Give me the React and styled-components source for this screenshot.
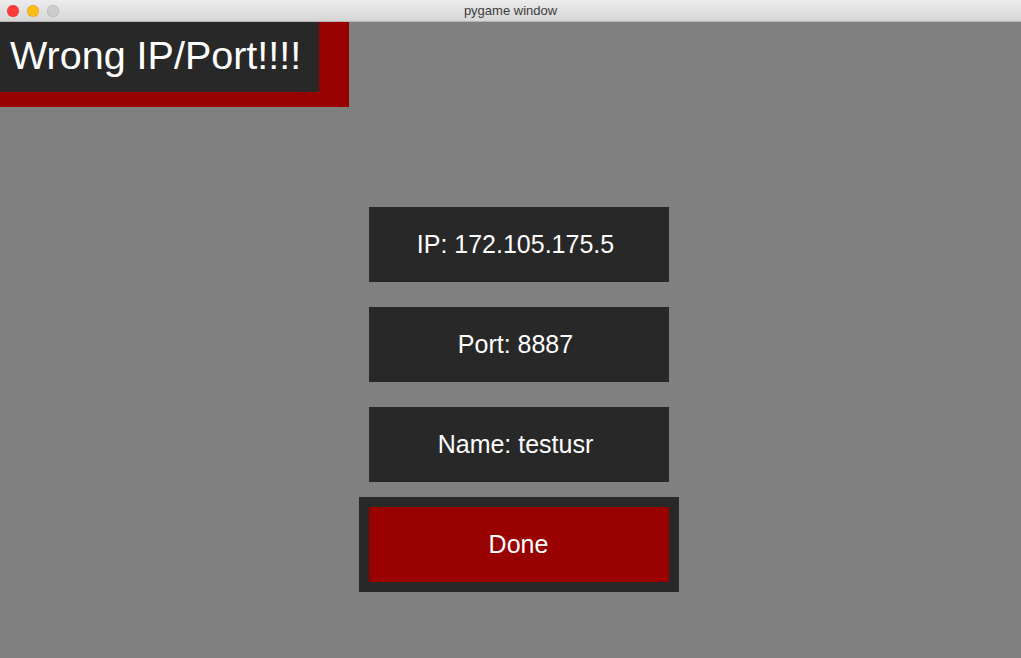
import React from 'react';
import styled, { createGlobalStyle } from 'styled-components';

const GlobalStyle = createGlobalStyle`
  html, body {
    margin: 0;
    padding: 0;
    background: #808080;
    font-family: "Liberation Sans", Arial, sans-serif;
  }
`;

const Window = styled.div`
  width: 1021px;
  height: 658px;
  display: flex;
  flex-direction: column;
  overflow: hidden;
`;

const TitleBar = styled.div`
  height: 21px;
  flex-shrink: 0;
  position: relative;
  display: flex;
  align-items: center;
  justify-content: center;
  background: linear-gradient(#ececec, #d6d6d6);
  border-bottom: 1px solid #b4b4b4;
  font-size: 13px;
  color: #3c3c3c;
`;

const Lights = styled.div`
  position: absolute;
  left: 7px;
  top: 5px;
  display: flex;
  gap: 8px;
`;

const Light = styled.span`
  width: 12px;
  height: 12px;
  border-radius: 50%;
  background: ${p => p.color};
  box-shadow: inset 0 0 0 0.5px rgba(0, 0, 0, 0.15);
`;

const Canvas = styled.div`
  flex: 1;
  background: #808080;
  display: flex;
  flex-direction: column;
`;

const Banner = styled.div`
  align-self: flex-start;
  background: #990000;
  padding: 0 30px 15px 0;
`;

const BannerText = styled.div`
  width: 319px;
  height: 70px;
  box-sizing: border-box;
  background: #282828;
  color: #fff;
  font-size: 39.5px;
  padding-left: 10px;
  padding-bottom: 4px;
  display: flex;
  align-items: center;
`;

const Form = styled.div`
  margin-top: 100px;
  padding-left: 16px;
  display: flex;
  flex-direction: column;
  align-items: center;
  gap: 25px;
`;

const Field = styled.div`
  width: 300px;
  height: 75px;
  display: flex;
  align-items: center;
  justify-content: center;
  background: ${p => (p.primary ? '#990000' : '#282828')};
  outline: ${p => (p.primary ? '10px solid #282828' : 'none')};
  color: #fff;
  font-size: 25px;
  padding: 0 ${p => (p.primary ? '0' : '6px')} 1px 0;
  box-sizing: border-box;
`;

export default function App() {
  return (
    <>
      <GlobalStyle />
      <Window>
        <TitleBar>
          <Lights>
            <Light color="#fd3b3b" />
            <Light color="#fdbb16" />
            <Light color="#cccccc" />
          </Lights>
          pygame window
        </TitleBar>
        <Canvas>
          <Banner>
            <BannerText>Wrong IP/Port!!!!</BannerText>
          </Banner>
          <Form>
            <Field>IP: 172.105.175.5</Field>
            <Field>Port: 8887</Field>
            <Field>Name: testusr</Field>
            <Field primary>Done</Field>
          </Form>
        </Canvas>
      </Window>
    </>
  );
}
